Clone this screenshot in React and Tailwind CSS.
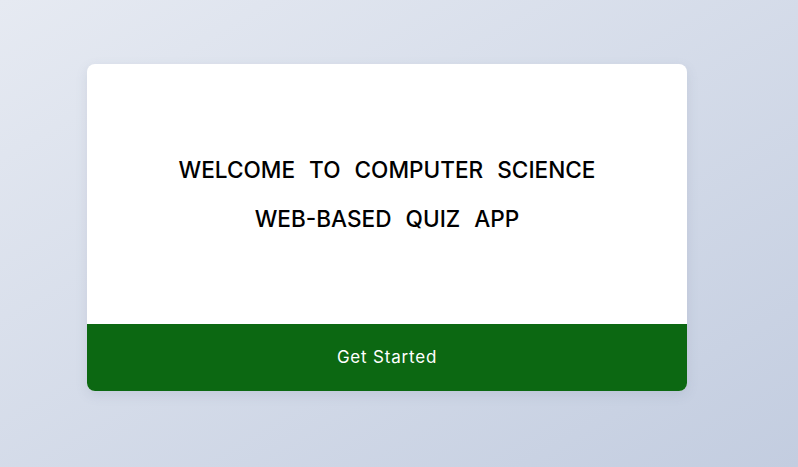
export default function App() {
  return (
    <div
      className="min-h-screen w-full bg-gradient-to-br from-[#e6eaf2] to-[#c3cde0] pt-16"
      style={{ fontFamily: 'Inter, "Open Sans", sans-serif' }}
    >
      <div className="ml-[87px] w-[600px] rounded-lg overflow-hidden bg-white shadow-[0_4px_12px_rgba(100,116,139,0.15)]">
        <div className="h-[260px] flex items-center justify-center">
          <h1 className="text-center text-[22.6px] leading-[49px] font-medium uppercase text-black [word-spacing:8px]">
            Welcome to Computer Science
            <br />
            Web-Based Quiz App
          </h1>
        </div>
        <button className="w-full h-[67px] bg-[#0c6812] text-white text-[17px] tracking-[0.8px] pt-[1px]">
          Get Started
        </button>
      </div>
    </div>
  );
}
